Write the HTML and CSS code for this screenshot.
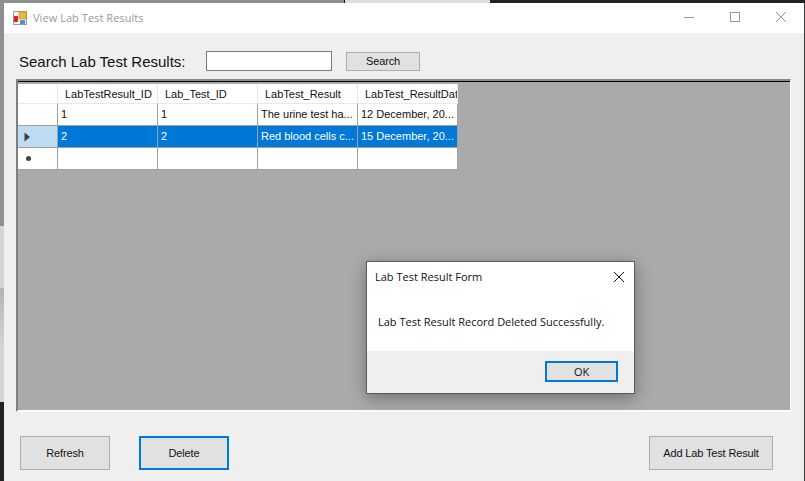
FILE: index.html
```html
<!DOCTYPE html>
<html lang="en">
<head>
    <meta charset="UTF-8">
    <meta name="viewport" content="width=device-width, initial-scale=1.0">
    <title>View Lab Test Results</title>
<link rel="stylesheet" href="styles.css">
</head>
<body>
<div class="window">
    <div class="titlebar">
        <svg class="appicon" width="14" height="14" viewBox="0 0 14 14">
            <rect x="0.5" y="0.5" width="13" height="13" fill="#f4f4f4" stroke="#9a9a9a"/>
            <rect x="1" y="5" width="4" height="6" fill="#d4262c"/>
            <rect x="6" y="1" width="7" height="7" fill="#f2b632" stroke="#c98f1d" stroke-width="0.6"/>
            <rect x="7" y="9" width="5" height="4" fill="#4a90e2"/>
        </svg>
        <span class="wintitle">View Lab Test Results</span>
        <div class="wincontrols">
            <svg width="46" height="30" viewBox="0 0 46 30"><path d="M18 14.5h10" stroke="#999" fill="none"/></svg>
            <svg width="46" height="30" viewBox="0 0 46 30"><rect x="18.5" y="9.5" width="9" height="9" stroke="#999" fill="none"/></svg>
            <svg width="46" height="30" viewBox="0 0 46 30"><path d="M18 9l10 10M28 9l-10 10" stroke="#999" fill="none"/></svg>
        </div>
    </div>
    <div class="content">
        <div class="searchrow">
            <label class="searchlabel" for="q">Search Lab Test Results:</label>
            <input class="searchbox" id="q" type="text">
            <button class="btn btn-search">Search</button>
        </div>
        <div class="grid">
            <div class="gridtop"></div>
            <div class="rows">
                <div class="row head">
                    <div class="rh"></div>
                    <div class="cell">LabTestResult_ID</div>
                    <div class="cell">Lab_Test_ID</div>
                    <div class="cell">LabTest_Result</div>
                    <div class="cell">LabTest_ResultDat</div>
                </div>
                <div class="row">
                    <div class="rh"></div>
                    <div class="cell">1</div>
                    <div class="cell">1</div>
                    <div class="cell">The urine test ha...</div>
                    <div class="cell">12 December, 20...</div>
                </div>
                <div class="row selected">
                    <div class="rh">
                        <svg width="7" height="10" viewBox="0 0 7 10"><path d="M0.5 0.5L6 5L0.5 9.5z" fill="#3c3c3c"/></svg>
                    </div>
                    <div class="cell">2</div>
                    <div class="cell">2</div>
                    <div class="cell">Red blood cells c...</div>
                    <div class="cell">15 December, 20...</div>
                </div>
                <div class="row">
                    <div class="rh"><span class="star"></span></div>
                    <div class="cell"></div>
                    <div class="cell"></div>
                    <div class="cell"></div>
                    <div class="cell"></div>
                </div>
            </div>
        </div>
        <div class="actions">
            <button class="btn btn-big">Refresh</button>
            <button class="btn btn-del">Delete</button>
            <button class="btn btn-add">Add Lab Test Result</button>
        </div>
    </div>
</div>

<div class="dialog">
    <div class="dlghead">
        <span class="dlgtitle">Lab Test Result Form</span>
        <svg width="12" height="12" viewBox="0 0 12 12"><path d="M1 1l10 10M11 1L1 11" stroke="#111" fill="none"/></svg>
    </div>
    <div class="dlgmsg">Lab Test Result Record Deleted Successfully.</div>
    <div class="dlgfoot"><button class="btn btn-ok">OK</button></div>
</div>
</body>
</html>
```
FILE: styles.css
```css
html,body{margin:0;height:100%;overflow:hidden;}
body{padding:3px 0 0 4px;box-sizing:border-box;height:481px;position:relative;
font-family:"Liberation Sans",Arial,sans-serif;font-size:11px;color:#111;
background:
linear-gradient(90deg,#8f8f8f 0,#8f8f8f 344px,#111 344px,#111 345px,#ddd 345px,#ddd 490px,#222 490px) top/100% 3px no-repeat,
linear-gradient(180deg,#8f8f8f 0,#8f8f8f 226px,#d4d4d4 226px,#d4d4d4 288px,#b4b4b4 288px,#d4d4d4 347px,#d4d4d4 402px,#222 402px);}
button{font-family:inherit;font-size:11px;color:#111;padding:0;letter-spacing:-.15px;}

.window{width:800px;height:478px;background:#efefef;border-right:1px solid #3a3a3a;}
.titlebar{height:30px;background:#fff;display:flex;align-items:center;padding-left:9px;}
.appicon{flex:none;margin-right:6px;margin-top:-1px;}
.wintitle{color:#9a9a9a;font-family:"Open Sans",sans-serif;font-size:11px;letter-spacing:.05px;margin-top:-2px;}
.wincontrols{margin-left:auto;display:flex;}

.content{padding:0 13px 0 12px;}
.searchrow{display:flex;align-items:center;height:46px;padding-top:10px;box-sizing:border-box;}
.searchlabel{font-size:15px;margin-left:3px;width:187px;color:#111;}
.searchbox{width:126px;height:20px;box-sizing:border-box;border:1px solid #7a7a7a;background:#fff;padding:0;margin:0;}
.btn{background:#e1e1e1;border:1px solid #adadad;box-sizing:border-box;}
.btn-search{width:74px;height:19px;margin-left:14px;}

.grid{width:775px;height:333px;background:#aaa;box-sizing:border-box;
border-top:2px solid #8a8a8a;border-left:2px solid #7f7f7f;border-right:1px solid #fff;border-bottom:2px solid #fff;}
.gridtop{height:1px;background:#000;}
.rows{padding-top:2px;}
.row{display:flex;height:22px;width:440px;background:#fff;box-sizing:border-box;border-bottom:1px solid #a0a0a0;border-right:1px solid #a0a0a0;}
.row.head{height:20px;border-bottom:1px solid #e8e8e8;border-right:1px solid #e8e8e8;}
.rh{width:39px;flex:none;display:flex;align-items:center;padding-left:6px;box-sizing:border-box;}
.cell{width:100px;flex:none;box-sizing:border-box;border-left:1px solid #a0a0a0;padding:0 0 0 3px;line-height:21px;white-space:nowrap;overflow:hidden;}
.row.head .cell{border-left:1px solid #e8e8e8;padding-left:7px;line-height:20px;}
.row.selected{background:#0078d7;color:#fff;}
.row.selected .rh{background:#bcdcf4;}
.star{width:5px;height:5px;border-radius:50%;background:#444;margin-left:2px;}

.actions{display:flex;align-items:center;padding:24px 0 0 4px;}
.btn-big{width:90px;height:34px;}
.btn-del{width:90px;height:34px;margin-left:29px;border:2px solid #0078d7;}
.btn-add{width:124px;height:34px;margin-left:auto;margin-right:18px;}

.dialog{position:absolute;left:366px;top:261px;width:269px;height:133px;box-sizing:border-box;
background:#fff;border:1px solid #5a5a5a;box-shadow:0 4px 16px rgba(0,0,0,.35);display:flex;flex-direction:column;
font-family:"Open Sans",sans-serif;font-size:11px;}
.dlghead{display:flex;justify-content:space-between;align-items:center;padding:0 9px 0 8px;height:30px;}
.dlgtitle{margin-top:-2px;}
.dlgmsg{flex:1;padding:21px 0 0 11px;line-height:17px;}
.dlgfoot{height:42px;background:#efefef;display:flex;justify-content:flex-end;padding:10px 16px 0 0;box-sizing:border-box;}
.btn-ok{width:73px;height:21px;border:2px solid #0078d7;font-family:inherit;}
```
